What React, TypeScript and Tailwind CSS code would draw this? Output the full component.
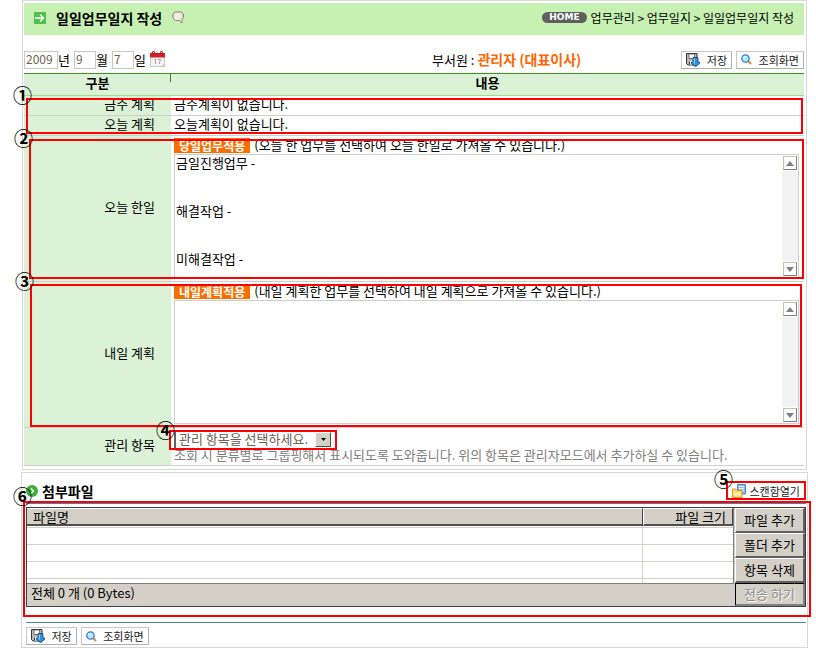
import type { ReactNode } from "react";
import clsx from "clsx";

const NOTES = {
  today: "금일진행업무 -\n\n\n해결작업 -\n\n\n미해결작업 -",
  tomorrow: "",
};

const FILE_ROWS = ["h-[2px]", "h-[17px]", "h-[17px]", "h-[17px]"];

function ArrowSquareIcon() {
  return (
    <svg width="12" height="12" viewBox="0 0 12 12" aria-hidden="true">
      <rect width="12" height="12" fill="#4fc04f" />
      <path d="M1 6h8.500M6 2.500L9.500 6 6 9.500" fill="none" stroke="#fff" strokeWidth="1.500" />
    </svg>
  );
}

function BubbleIcon() {
  return (
    <svg width="13" height="13" viewBox="0 0 13 13" aria-hidden="true">
      <path
        d="M3.5 1h5.500L11.500 3v3.500L10 8.500v3.500L7 9.500H3.500L1 7V3z"
        fill="#f3eedf"
        stroke="#85826f"
      />
      <path d="M10 3v3.500L8 8" fill="none" stroke="#cdc8b4" />
    </svg>
  );
}

function CalendarIcon() {
  return (
    <svg width="15" height="17" viewBox="0 0 15 17" aria-hidden="true">
      <path d="M.5 4.5h14v11H.5z" fill="#f4f2f2" stroke="#cfc8c8" />
      <path d="M0 2h15v4.500H0z" fill="#d3202a" />
      <circle cx="3.5" cy="1.800" r="1.700" fill="#c4141f" />
      <circle cx="11.500" cy="1.800" r="1.700" fill="#c4141f" />
      <path d="M3 1.500h1M11 1.500h1" stroke="#fff" />
      <path d="M5.500 8v5M4.500 8.500h1M8 8.500h2.500L9 13" fill="none" stroke="#a9a0a2" />
      <path d="M11 16l3.500-3.500V16z" fill="#d9b9bb" />
    </svg>
  );
}

function SaveIcon() {
  return (
    <svg width="14" height="14" viewBox="0 0 14 14" aria-hidden="true">
      <path d="M.5.500h10.500v11.500H2L.5 10.500z" fill="#b9b9b9" stroke="#333" />
      <path d="M3 1h5.500v4.500H3z" fill="#fff" stroke="#555" strokeWidth=".8" />
      <path d="M3 8h4v3.500H3z" fill="#f2f2f2" />
      <path d="M3.500 8.500v3" stroke="#333" />
      <path d="M7 4.500h5v4.500h1.500v1.500L9.500 13.700 5.500 10.500V9H7z" fill="#2f8fe0" stroke="#123d73" strokeWidth=".8" />
      <path d="M8.300 5.500v5" stroke="#a5dcff" />
    </svg>
  );
}

function SearchIcon() {
  return (
    <svg width="11" height="11" viewBox="0 0 11 11" aria-hidden="true">
      <path d="M7 7l3 3" stroke="#e08a2e" strokeWidth="2" />
      <circle cx="4.500" cy="4.500" r="3.700" fill="#b9e6ff" stroke="#2b7fd8" strokeWidth="1.300" />
      <path d="M2.800 4.200a2 2 0 0 1 1.600-1.400" fill="none" stroke="#fff" strokeWidth="1.500" />
    </svg>
  );
}

function BulletIcon() {
  return (
    <svg width="12" height="12" viewBox="0 0 12 12" aria-hidden="true">
      <circle cx="6" cy="6" r="6" fill="#3cb035" />
      <path d="M5 3.500L7.500 6 5 8.500" fill="none" stroke="#fff" strokeWidth="1.500" />
    </svg>
  );
}

function ScanFolderIcon() {
  return (
    <svg width="14" height="14" viewBox="0 0 14 14" aria-hidden="true">
      <path d="M5.500.500h8v9.500h-8z" fill="#8fbbea" stroke="#4f83c4" />
      <path d="M7 2.500h5M7 4.500h5M7 6.500h5" stroke="#eaf4ff" />
      <path d="M.5 5h3.500l1 1.500h5v7H.5z" fill="#ffd76a" stroke="#d29a22" />
      <path d="M1.500 8.500h7.500v3H1.500z" fill="#fff0b8" />
    </svg>
  );
}

function ToolButton({ icon, children }: { icon: ReactNode; children: ReactNode }) {
  return (
    <button
      type="button"
      className="flex h-[18px] items-center gap-1 border border-[#c8c8c8] border-r-[#b0b0b0] border-b-[#b0b0b0] bg-white px-1 text-[11px] leading-4 text-[#222]"
    >
      {icon}
      {children}
    </button>
  );
}

function Toolbar() {
  return (
    <div className="flex gap-1">
      <ToolButton icon={<SaveIcon />}>&nbsp;저장</ToolButton>
      <ToolButton icon={<SearchIcon />}>&nbsp;조회화면</ToolButton>
    </div>
  );
}

function DateField({ label, value, className }: { label: string; value: string; className: string }) {
  return (
    <label className="flex items-center">
      <input
        defaultValue={value}
        className={clsx(
          "h-[18px] border border-[#c8c8c8] bg-white px-px pb-0.5 text-[12px] leading-4 text-[#6f5f52]",
          className,
        )}
      />
      <span className="leading-4">{label}</span>
    </label>
  );
}

function ScrollArrow({ down = false }: { down?: boolean }) {
  return (
    <button
      type="button"
      aria-label={down ? "아래로" : "위로"}
      className="flex size-[14px] items-center justify-center border border-[#c5c3ae] border-r-[#808080] border-b-[#808080] bg-white"
    >
      <svg width="8" height="5" viewBox="0 0 8 5" aria-hidden="true">
        <path d={down ? "M0 0h8L4 5z" : "M0 5h8L4 0z"} fill="#808080" />
      </svg>
    </button>
  );
}

function NoteEditor({ apply, hint, label, value }: { apply: string; hint: string; label: string; value: string }) {
  return (
    <div className="pt-0.5 pr-[5px] pl-[3px]">
      <div className="flex h-4 items-start gap-1">
        <button type="button" className="h-[15px] bg-[#f86f00] px-[5px] text-[12px] leading-[15px] font-bold text-white">
          {apply}
        </button>
        <span className="leading-[14px]">{hint}</span>
      </div>
      <div className="flex h-[124px] border border-[#cfcfcf]">
        <textarea
          aria-label={label}
          defaultValue={value}
          className="min-w-0 flex-1 resize-none overflow-hidden px-px leading-4 outline-none"
        />
        <div className="flex w-4 flex-col items-center bg-white py-px">
          <ScrollArrow />
          <div className="my-px w-full flex-1 bg-[#f3f3f3]" />
          <ScrollArrow down />
        </div>
      </div>
    </div>
  );
}

function FormRow({ label, children }: { label: string; children: ReactNode }) {
  return (
    <tr>
      <th
        scope="row"
        className="border-b border-[#cfcfcf] bg-[#dcf2d6] p-0 pr-4 pb-[3px] text-right leading-4 font-normal"
      >
        {label}
      </th>
      <td className="border-b border-[#cfcfcf] p-0 pb-[3px] leading-4">{children}</td>
    </tr>
  );
}

// red frame and its number, drawn over the form
function Callout({ mark, box, badge }: { mark: string; box: string; badge: string }) {
  return (
    <>
      <div className={clsx("pointer-events-none absolute border-2 border-[#ff0000]", box)} />
      <span className={clsx("pointer-events-none absolute text-[19px] leading-5 font-bold", badge)}>{mark}</span>
    </>
  );
}

function GridButton({ children, disabled = false }: { children: ReactNode; disabled?: boolean }) {
  return (
    <button
      type="button"
      disabled={disabled}
      className={clsx(
        "w-full bg-[#d4d0c8] leading-4",
        disabled
          ? "h-[23px] border-t border-r-2 border-b-2 border-l border-t-black border-r-[#808080] border-b-[#808080] border-l-black text-[#8c8c8c] [text-shadow:1px_1px_0_#fff]"
          : "h-[25px] border-t border-r-2 border-b-2 border-l border-t-white border-r-[#606060] border-b-[#606060] border-l-white",
      )}
    >
      {children}
    </button>
  );
}

function DiaryPanel() {
  return (
    <section className="relative mr-[9px] ml-[22px] border border-[#d8d8d8] pt-0.5 pr-0.5 pb-[3px] pl-px">
      <header className="flex h-8 items-center justify-between bg-[#c6f1b2] px-[10px] pb-[3px]">
        <div className="flex items-center gap-[10px]">
          <ArrowSquareIcon />
          <h1 className="text-[14px] leading-4 font-bold">일일업무일지 작성</h1>
          <BubbleIcon />
        </div>
        <nav className="flex items-center gap-1 text-[12px] leading-4">
          <a
            href="#home"
            className="rounded-full bg-[#5f5f5f] px-[7px] font-['DejaVu_Sans'] text-[9px] leading-[11px] font-bold text-white"
          >
            HOME
          </a>
          <span>업무관리 &gt; 업무일지 &gt; 일일업무일지 작성</span>
        </nav>
      </header>

      <div className="flex h-[38px] items-center pt-[14px] pb-[3px]">
        <div className="flex items-center gap-1">
          <DateField label="년" value="2009" className="w-[34px]" />
          <DateField label="월" value="9" className="w-[22px]" />
          <DateField label="일" value="7" className="w-[22px]" />
          <button type="button" aria-label="달력">
            <CalendarIcon />
          </button>
        </div>
        <p className="mr-[100px] ml-auto leading-4">
          부서원 : <strong className="text-[14px] text-[#ff6600]">관리자 (대표이사)</strong>
        </p>
        <Toolbar />
      </div>

      <table className="w-full table-fixed border-separate border-spacing-0">
        <colgroup>
          <col className="w-[147px]" />
          <col />
        </colgroup>
        <thead>
          <tr className="bg-[#dcf2d6]">
            <th className="relative border-t border-b border-t-[#3b9a1d] border-b-[#a3dc8e] p-0 pb-[3px] leading-[18px]">
              구분
              <span className="absolute top-0 right-0 h-2 w-px bg-[#3b7a2d]" />
            </th>
            <th className="border-t border-b border-t-[#3b9a1d] border-b-[#a3dc8e] p-0 pb-[3px] leading-[18px]">내용</th>
          </tr>
        </thead>
        <tbody>
          <FormRow label="금주 계획">
            <span className="pl-[3px]">금주계획이 없습니다.</span>
          </FormRow>
          <FormRow label="오늘 계획">
            <span className="pl-[3px]">오늘계획이 없습니다.</span>
          </FormRow>
          <FormRow label="오늘 한일">
            <NoteEditor
              apply="당일업무적용"
              hint="(오늘 한 업무를 선택하여 오늘 한일로 가져올 수 있습니다.)"
              label="오늘 한일"
              value={NOTES.today}
            />
          </FormRow>
          <FormRow label="내일 계획">
            <NoteEditor
              apply="내일계획적용"
              hint="(내일 계획한 업무를 선택하여 내일 계획으로 가져올 수 있습니다.)"
              label="내일 계획"
              value={NOTES.tomorrow}
            />
          </FormRow>
          <FormRow label="관리 항목">
            <div className="flex flex-col items-start pt-[3px] pl-[3px]">
              <div className="relative">
                <select
                  aria-label="관리 항목"
                  className="block h-[17px] w-[158px] appearance-none border-t border-l-2 border-t-[#808080] border-l-[#606060] bg-white pb-0.5 pl-[3px] leading-[14px] text-[#6f5f52]"
                >
                  <option>관리 항목을 선택하세요.</option>
                </select>
                <span className="pointer-events-none absolute top-px right-px flex h-[15px] w-4 items-center justify-center border border-t-white border-r-[#505050] border-b-[#505050] border-l-white bg-[#d4d0c8]">
                  <svg width="5" height="3" viewBox="0 0 5 3" aria-hidden="true">
                    <path d="M0 0h5L2.500 3z" fill="#000" />
                  </svg>
                </span>
              </div>
              <p className="leading-[14px] text-[#808080]">
                조회 시 분류별로 그룹핑해서 표시되도록 도와줍니다. 위의 항목은 관리자모드에서 추가하실 수 있습니다.
              </p>
            </div>
          </FormRow>
        </tbody>
      </table>

      <Callout mark="①" box="top-[97px] right-[3px] left-[3px] h-9" badge="top-[84px] left-[-10px]" />
      <Callout mark="②" box="top-[138px] right-0.5 left-1.5 h-[140px]" badge="top-[127px] left-[-9px]" />
      <Callout mark="③" box="top-[283px] right-1 left-[7px] h-[143px]" badge="top-[270px] left-[-8px]" />
      <Callout mark="④" box="top-[429px] left-[146px] h-5 w-[168px]" badge="top-[419px] left-[133px]" />
    </section>
  );
}

function AttachmentPanel() {
  return (
    <section className="relative mt-0.5 mr-2 ml-[21px] border border-[#d8d8d8] pr-px pb-0.5 pl-1">
      <div className="flex h-[30px] items-center justify-between pt-[5px]">
        <div className="flex items-center gap-1">
          <BulletIcon />
          <h2 className="text-[14px] leading-4 font-bold">첨부파일</h2>
        </div>
        <button type="button" className="flex items-center gap-[3px] pr-[6px] text-[11px] leading-4 text-[#222]">
          <ScanFolderIcon />
          스캔함열기
        </button>
      </div>

      <div className="mb-[15px] border-t border-[#4682b4] pt-[3px]">
        <div className="flex border border-[#404040] bg-[#d4d0c8]">
          <div className="min-w-0 flex-1">
            <table className="w-full table-fixed border-separate border-spacing-0 border-r border-[#808080] bg-white">
              <colgroup>
                <col />
                <col className="w-[90px]" />
              </colgroup>
              <thead>
                <tr className="bg-[#d4d0c8]">
                  <th className="border-t border-r border-b-2 border-t-white border-r-[#404040] border-b-[#505050] p-0 pl-1.5 text-left leading-[15px] font-normal">
                    파일명
                  </th>
                  <th className="border-t border-r border-b-2 border-l border-t-white border-r-[#404040] border-b-[#505050] border-l-white p-0 pr-1.5 text-right leading-[15px] font-normal">
                    파일 크기
                  </th>
                </tr>
              </thead>
              <tbody>
                {FILE_ROWS.map((height, i) => (
                  <tr key={i} className={height}>
                    <td className="border-r border-b border-[#d4d0c8] p-0" />
                    <td className="border-b border-[#d4d0c8] p-0" />
                  </tr>
                ))}
                <tr className="h-1">
                  <td className="border-r border-[#d4d0c8] p-0" />
                  <td className="p-0" />
                </tr>
              </tbody>
            </table>
            <p className="border-t border-[#808080] pl-1 leading-[17px]">전체 0 개 (0 Bytes)</p>
          </div>
          <div className="w-[71px] pl-px">
            <GridButton>파일 추가</GridButton>
            <GridButton>폴더 추가</GridButton>
            <GridButton>항목 삭제</GridButton>
            <GridButton disabled>전송 하기</GridButton>
          </div>
        </div>
      </div>

      <div className="border-t border-[#4682b4] pt-1">
        <Toolbar />
      </div>

      <Callout mark="⑤" box="top-2 right-px h-[19px] w-20" badge="top-[-4px] right-[74px]" />
      <Callout mark="⑥" box="top-7 right-[-4px] left-px h-[116px]" badge="top-[13px] left-[-9px]" />
    </section>
  );
}

export default function App() {
  return (
    <main className="bg-white font-['Noto_Sans_CJK_KR',sans-serif] text-[13px] text-black">
      <DiaryPanel />
      <AttachmentPanel />
    </main>
  );
}
